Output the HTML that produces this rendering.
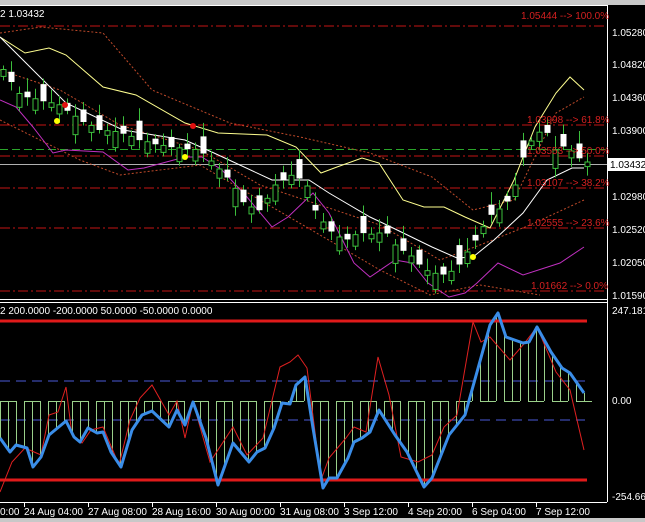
<!DOCTYPE html>
<html><head><meta charset="utf-8"><style>
html,body{margin:0;padding:0;background:#000;width:645px;height:522px;overflow:hidden}
svg{display:block}
text{font-family:"Liberation Sans",sans-serif;font-size:10px}
</style></head><body>
<svg id="s" width="645" height="522" xmlns="http://www.w3.org/2000/svg">
<rect width="645" height="522" fill="#000"/>
<rect x="0" y="0" width="645" height="5" fill="#c8c8c8"/>
<line x1="0" y1="5.5" x2="607" y2="5.5" stroke="#fff"/>
<line x1="607.5" y1="5" x2="607.5" y2="502" stroke="#fff"/>
<line x1="0" y1="299.5" x2="607" y2="299.5" stroke="#fff"/>
<line x1="0" y1="302.5" x2="607" y2="302.5" stroke="#fff"/>
<line x1="0" y1="502.5" x2="607" y2="502.5" stroke="#fff"/>
<rect x="0" y="518" width="645" height="4" fill="#c8c8c8"/>
<text x="0" y="17" fill="#fff">2 1.03432</text>
<g stroke="#c41414" stroke-dasharray="10,3,2,3" stroke-width="1">
<line x1="0" y1="26" x2="605" y2="26"/><line x1="0" y1="125" x2="605" y2="125"/><line x1="0" y1="156" x2="605" y2="156"/><line x1="0" y1="188" x2="605" y2="188"/><line x1="0" y1="228" x2="605" y2="228"/><line x1="0" y1="291" x2="605" y2="291"/>
</g>
<line x1="0" y1="149.5" x2="605" y2="149.5" stroke="#2aa52a" stroke-dasharray="8,4"/>
<line x1="0" y1="164.5" x2="607" y2="164.5" stroke="#b0b0b0"/>
<g fill="none" stroke-width="1">
<polyline stroke="#c04a2a" stroke-dasharray="2,2" points="0,33 41,27 103,33 152,90 230,123 300,137 370,153 432,177 473,210 514,200 556,113 584,97"/>
<polyline stroke="#c04a2a" stroke-dasharray="2,2" points="0,70 60,90 120,125 200,150 260,185 320,205 380,225 440,260 480,245 530,225 584,200"/>
<polyline stroke="#c04a2a" stroke-dasharray="2,2" points="0,120 80,160 120,175 200,165 260,200 320,235 380,270 430,295 480,285 540,295"/>
<polyline stroke="#ffff90" points="0,37 25,53 49,48 66,55 103,87 136,95 185,123 218,133 267,135 296,147 321,173 337,167 362,158 379,163 403,200 424,207 444,207 465,217 490,228 514,180 535,127 556,93 570,77 584,90"/>
<polyline stroke="#fff" points="0,37 66,103 123,130 185,140 214,153 272,180 309,180 329,193 370,217 391,227 432,247 457,258 473,257 494,240 523,213 547,180 572,168 584,168"/>
<polyline stroke="#c030c0" points="0,100 16,107 33,127 53,153 66,150 103,152 128,170 144,168 185,157 202,157 222,170 247,197 272,227 288,217 313,193 329,213 354,263 370,277 395,260 412,263 428,283 449,297 465,293 477,283 498,263 523,275 560,263 584,247"/>
</g>
<g id="candles"></g>
<g fill="#d42020" font-size="10">
<text x="521" y="19">1.05444 --&gt; 100.0%</text><text x="527" y="123">1.03998 --&gt; 61.8%</text><text x="527" y="154">1.03553 --&gt; 50.0%</text><text x="527" y="186">1.03107 --&gt; 38.2%</text><text x="527" y="226">1.02555 --&gt; 23.6%</text><text x="531" y="289">1.01662 --&gt; 0.0%</text>
</g>
<g fill="#fff">
<text x="612" y="36">1.05280</text><text x="612" y="68">1.04820</text><text x="612" y="101">1.04360</text><text x="612" y="134">1.03900</text><text x="612" y="200">1.02980</text><text x="612" y="233">1.02520</text><text x="612" y="266">1.02050</text><text x="612" y="299">1.01590</text>
<text x="612" y="314">247.1811</text><text x="612" y="404">0.00</text><text x="612" y="500">-254.662</text>
</g>
<rect x="608" y="158" width="37" height="13" fill="#fff"/><text x="610" y="168" fill="#000">1.03432</text>
<circle cx="65" cy="105" r="3" fill="#e01010"/><circle cx="193" cy="126" r="3" fill="#e01010"/>
<circle cx="57" cy="121" r="3" fill="#ffff00"/><circle cx="185" cy="157" r="3" fill="#ffff00"/><circle cx="473" cy="257" r="3" fill="#ffff00"/>
<text x="0" y="314" fill="#fff">2 200.0000 -200.0000 50.0000 -50.0000 0.0000</text>
<g stroke="#4a5ad8" stroke-dasharray="10,6"><line x1="0" y1="381" x2="585" y2="381"/><line x1="0" y1="420" x2="585" y2="420"/></g>
<g id="hist"></g>
<line x1="0" y1="321" x2="587" y2="321" stroke="#e01a1a" stroke-width="3"/>
<line x1="0" y1="480" x2="587" y2="480" stroke="#e01a1a" stroke-width="3"/>
<polyline fill="none" stroke="#e02020" stroke-width="1" points="0,492 12,462 25,448 41,455 49,415 58,412 66,387 72,435 82,443 91,430 103,427 119,465 130,420 140,398 152,385 169,415 177,401 185,438 193,402 210,462 233,427 247,455 263,438 280,367 290,362 298,355 307,368 321,480 329,458 346,438 354,427 366,432 378,357 389,395 401,457 418,462 432,455 444,427 457,415 473,322 481,342 490,337 510,360 523,345 537,327 556,372 570,390 584,450"/>
<polyline id="blue" fill="none" stroke="#3a8de8" stroke-width="3" stroke-linejoin="round" points="0,438 10,452 16,445 27,448 33,467 41,457 49,435 66,421 74,437 80,442 88,428 97,433 103,432 111,452 121,467 132,430 142,415 152,411 169,427 177,410 185,425 193,402 206,438 218,485 233,443 249,462 257,452 265,448 274,428 282,403 290,404 296,385 305,377 313,428 323,488 329,478 337,478 348,458 354,442 362,438 370,432 379,410 395,435 407,452 424,487 432,478 449,435 457,425 465,415 477,372 490,325 498,313 506,337 523,343 529,342 537,327 551,352 562,368 570,373 584,393"/>
<g fill="#fff"><text x="0" y="515">0:00</text><text x="24" y="515">24 Aug 04:00</text><text x="88" y="515">27 Aug 08:00</text><text x="152" y="515">28 Aug 16:00</text><text x="216" y="515">30 Aug 00:00</text><text x="280" y="515">31 Aug 08:00</text><text x="344" y="515">3 Sep 12:00</text><text x="408" y="515">4 Sep 20:00</text><text x="472" y="515">6 Sep 04:00</text><text x="536" y="515">7 Sep 12:00</text></g>
<g stroke="#fff"><line x1="24.5" y1="503" x2="24.5" y2="507"/><line x1="88.5" y1="503" x2="88.5" y2="507"/><line x1="152.5" y1="503" x2="152.5" y2="507"/><line x1="216.5" y1="503" x2="216.5" y2="507"/><line x1="280.5" y1="503" x2="280.5" y2="507"/><line x1="344.5" y1="503" x2="344.5" y2="507"/><line x1="408.5" y1="503" x2="408.5" y2="507"/><line x1="472.5" y1="503" x2="472.5" y2="507"/><line x1="536.5" y1="503" x2="536.5" y2="507"/></g>
</svg>
<script>
(function(){
var NS="http://www.w3.org/2000/svg";
function el(t,a,p){var e=document.createElementNS(NS,t);for(var k in a)e.setAttribute(k,a[k]);p.appendChild(e);return e;}
var P=[[0,65],[20,95],[40,100],[60,105],[80,120],[100,130],[120,132],[140,140],[160,145],[180,148],[200,150],[215,165],[230,180],[245,205],[260,210],[275,185],[290,175],[305,180],[315,210],[325,225],[335,235],[345,240],[360,232],[375,235],[385,230],[395,245],[410,255],[425,270],[440,275],[455,270],[465,255],[475,240],[490,215],[505,205],[515,185],[525,150],[535,135],[545,128],[555,150],[565,145],[575,155],[585,162]];
function py(x){for(var i=0;i<P.length-1;i++){if(x<=P[i+1][0]){var t=(x-P[i][0])/(P[i+1][0]-P[i][0]);return P[i][1]+t*(P[i+1][1]-P[i][1]);}}return P[P.length-1][1];}
var g=document.getElementById("candles");
var n=[3,-4,6,-2,5,-7,2,4,-3,8,-5,3,-6,2,7,-3,4,-8,5,-2];
for(var x=3,i=0;x<588;x+=8,i++){
 var c=py(x), o=c+n[i%20]*2.3; var hi=Math.min(o,c)-4-(i*7%11), lo=Math.max(o,c)+4+(i*5%10);
 el("line",{x1:x+.5,y1:hi,x2:x+.5,y2:lo,stroke:"#3cbf3c"},g);
 var up=o>c; var bt=Math.min(o,c),h=Math.max(2,Math.abs(o-c));
 el("rect",{x:x-2,y:bt,width:5,height:h,fill:up?"#000":"#fff",stroke:up?"#3cbf3c":"#fff"},g);
}
var pts=document.getElementById("blue").getAttribute("points").trim().split(" ").map(function(s){return s.split(",").map(Number)});
function by(x){for(var i=0;i<pts.length-1;i++){if(x<=pts[i+1][0]){var t=(x-pts[i][0])/(pts[i+1][0]-pts[i][0]);return pts[i][1]+t*(pts[i+1][1]-pts[i][1]);}}return pts[pts.length-1][1];}
var hg=document.getElementById("hist");
for(var x=0;x<=584;x+=8){el("line",{x1:x+.5,y1:401,x2:x+.5,y2:by(x),stroke:"#9ad08a"},hg);}
for(var x=0;x<584;x+=24){el("line",{x1:x,y1:401.5,x2:x+16,y2:401.5,stroke:"#9ad08a"},hg);}
})();
</script>
</body></html>
